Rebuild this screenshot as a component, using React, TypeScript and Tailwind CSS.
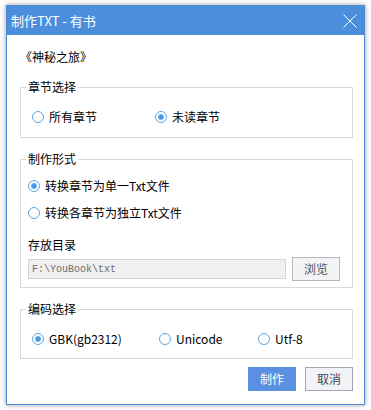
import React from "react";

const font = { fontFamily: '"Noto Sans CJK SC", "Noto Sans", sans-serif' };

function Radio({ checked, label, className = "" }: { checked?: boolean; label: string; className?: string }) {
  return (
    <div className={"flex items-center h-[16px] " + className}>
      <span className="w-[12px] h-[12px] rounded-full border border-[#5aa6e4] bg-white flex items-center justify-center shrink-0">
        {checked && (
          <span className="w-[6px] h-[6px] rounded-full bg-[radial-gradient(circle,#2f8ae0_0%,#5aa6ec_55%,#a9d1f5_100%)]" />
        )}
      </span>
      <span className="ml-[5px] text-[12px] leading-[16px] text-black whitespace-nowrap">{label}</span>
    </div>
  );
}

function Group({ title, children, className = "" }: { title: string; children: React.ReactNode; className?: string }) {
  return (
    <fieldset className={"border border-[#d9d9d9] min-w-0 " + className}>
      <legend className="ml-[5px] px-[2px] text-[12px] leading-[16px] text-black">{title}</legend>
      {children}
    </fieldset>
  );
}

export default function App() {
  return (
    <div className="w-[371px] h-[410px] bg-white pt-[5px] pl-[6px]" style={font}>
      <div className="w-[359px] h-[400px] border border-[#4a8ad6] bg-white shadow-[0_0_5px_rgba(0,0,0,0.4)] flex flex-col">
        <div className="h-[29px] bg-[#4b8fdc] flex items-center justify-between pl-[4px] pr-[7px]">
          <span className="text-white text-[13px] leading-[16px]">制作TXT - 有书</span>
          <svg width="14" height="14" viewBox="0 0 14 14" className="mt-[1px]">
            <path d="M0.5 0.5 L13.5 13.5 M13.5 0.5 L0.5 13.5" stroke="white" strokeWidth="1" />
          </svg>
        </div>
        <div className="flex flex-col pl-[13px] pr-[11px]">
          <div className="mt-[14px] text-[12px] leading-[16px] text-black">《神秘之旅》</div>

          <Group title="章节选择" className="mt-[14px]">
            <div className="flex pt-[14px] pb-[12px] pl-[11px]">
              <Radio label="所有章节" className="w-[123px]" />
              <Radio label="未读章节" checked />
            </div>
          </Group>

          <Group title="制作形式" className="mt-[13px]">
            <div className="flex flex-col pt-[11px] pb-[6px] pl-[7px] pr-[12px]">
              <Radio label="转换章节为单一Txt文件" checked />
              <Radio label="转换各章节为独立Txt文件" className="mt-[11px]" />
              <div className="mt-[16px] text-[12px] leading-[16px] text-black">存放目录</div>
              <div className="mt-[4px] flex items-center">
                <div className="flex-1 h-[20px] bg-[#f0f0f0] border border-[#d4d4d4] flex items-center pl-[3px] text-[10px] text-[#6e6e6e]" style={{ fontFamily: '"Liberation Mono", monospace' }}>
                  F:\YouBook\txt
                </div>
                <button className="ml-[6px] w-[48px] h-[24px] bg-[#f3f4f6] border border-[#b3b7bd] text-[12px] text-[#4a5466] leading-none">浏览</button>
              </div>
            </div>
          </Group>

          <Group title="编码选择" className="mt-[13px]">
            <div className="flex pt-[14px] pb-[11px] pl-[11px]">
              <Radio label="GBK(gb2312)" checked className="w-[127px]" />
              <Radio label="Unicode" className="w-[99px]" />
              <Radio label="Utf-8" />
            </div>
          </Group>

          <div className="mt-[8px] flex justify-end">
            <button className="w-[48px] h-[24px] bg-[#5a8fe2] text-white text-[12px] leading-none">制作</button>
            <button className="ml-[9px] w-[48px] h-[24px] bg-[#f1f3f6] border border-[#a3a7ad] text-[#3f4858] text-[12px] leading-none">取消</button>
          </div>
        </div>
      </div>
    </div>
  );
}
